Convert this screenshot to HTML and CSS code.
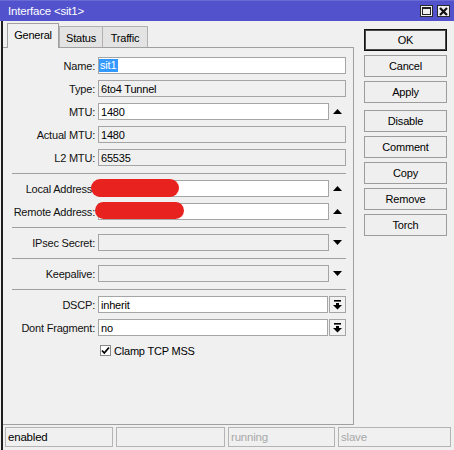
FILE: index.html
```html
<!DOCTYPE html>
<html>
<head>
<meta charset="utf-8">
<title>Interface &lt;sit1&gt;</title>
<link rel="stylesheet" href="styles.css">
</head>
<body>
<div class="window">
  <div class="titlebar">
    <span class="title">Interface &lt;sit1&gt;</span>
    <span class="tb-btns">
      <span class="tb-btn"><span class="max-ico"></span></span>
      <span class="tb-btn"><svg width="9" height="9" viewBox="0 0 9 9"><path d="M1 1 L8 8 M8 1 L1 8" stroke="#111" stroke-width="2.2"/></svg></span>
    </span>
  </div>
  <div class="body">
    <div class="main">
      <div class="left">
        <div class="tabs">
          <div class="tab active">General</div>
          <div class="tab t-status">Status</div>
          <div class="tab t-traffic">Traffic</div>
        </div>
        <div class="panel">
          <div class="group">
            <div class="row"><span class="lbl">Name:</span><div class="field"><div class="input"><span class="sel">sit1</span></div></div></div>
            <div class="row"><span class="lbl">Type:</span><div class="field"><div class="input ro">6to4 Tunnel</div></div></div>
            <div class="row"><span class="lbl">MTU:</span><div class="field"><div class="input">1480</div><span class="side"><svg width="9" height="5" viewBox="0 0 9 5"><polygon points="0,5 9,5 4.5,0" fill="#000"/></svg></span></div></div>
            <div class="row"><span class="lbl">Actual MTU:</span><div class="field"><div class="input ro">1480</div></div></div>
            <div class="row"><span class="lbl">L2 MTU:</span><div class="field"><div class="input ro">65535</div></div></div>
          </div>
          <div class="sep"></div>
          <div class="group">
            <div class="row"><span class="lbl">Local Address:</span><div class="field"><div class="input"></div><span class="side"><svg width="9" height="5" viewBox="0 0 9 5"><polygon points="0,5 9,5 4.5,0" fill="#000"/></svg></span></div><span class="redact redact-local"></span></div>
            <div class="row"><span class="lbl">Remote Address:</span><div class="field"><div class="input"></div><span class="side"><svg width="9" height="5" viewBox="0 0 9 5"><polygon points="0,5 9,5 4.5,0" fill="#000"/></svg></span></div><span class="redact redact-remote"></span></div>
          </div>
          <div class="sep"></div>
          <div class="group">
            <div class="row"><span class="lbl">IPsec Secret:</span><div class="field"><div class="input ro"></div><span class="side"><svg width="9" height="5" viewBox="0 0 9 5"><polygon points="0,0 9,0 4.5,5" fill="#000"/></svg></span></div></div>
          </div>
          <div class="sep"></div>
          <div class="group">
            <div class="row"><span class="lbl">Keepalive:</span><div class="field"><div class="input ro"></div><span class="side"><svg width="9" height="5" viewBox="0 0 9 5"><polygon points="0,0 9,0 4.5,5" fill="#000"/></svg></span></div></div>
          </div>
          <div class="sep"></div>
          <div class="group">
            <div class="row"><span class="lbl">DSCP:</span><div class="field"><div class="input">inherit</div><span class="side dd"><svg width="9" height="10" viewBox="0 0 9 10"><rect x="1" y="0" width="7" height="1.6" fill="#000"/><rect x="3" y="3" width="3" height="2" fill="#000"/><polygon points="0,5 9,5 4.5,9.5" fill="#000"/></svg></span></div></div>
            <div class="row"><span class="lbl">Dont Fragment:</span><div class="field"><div class="input">no</div><span class="side dd"><svg width="9" height="10" viewBox="0 0 9 10"><rect x="1" y="0" width="7" height="1.6" fill="#000"/><rect x="3" y="3" width="3" height="2" fill="#000"/><polygon points="0,5 9,5 4.5,9.5" fill="#000"/></svg></span></div></div>
            <div class="row"><span class="lbl"></span><div class="field"><span class="check"><svg width="9" height="9" viewBox="0 0 9 9"><polyline points="1,4.5 3.3,7 8,1.5" fill="none" stroke="#000" stroke-width="1.8"/></svg></span><span class="check-text">Clamp TCP MSS</span></div></div>
          </div>
        </div>
      </div>
      <div class="buttons">
        <div class="btn ok">OK</div>
        <div class="btn">Cancel</div>
        <div class="btn">Apply</div>
        <div class="btn gap-top">Disable</div>
        <div class="btn">Comment</div>
        <div class="btn">Copy</div>
        <div class="btn">Remove</div>
        <div class="btn">Torch</div>
      </div>
    </div>
    <div class="statusbar">
      <div class="cell c1">enabled</div>
      <div class="cell c2"></div>
      <div class="cell c3 dim">running</div>
      <div class="cell c4 dim">slave</div>
    </div>
  </div>
</div>
</body>
</html>
```
FILE: styles.css
```css
* { box-sizing: border-box; }
html, body { margin: 0; padding: 0; }
body {
  background: #f0f0f0;
  font-family: "Liberation Sans", Arial, sans-serif;
  font-size: 11px;
  letter-spacing: -0.2px;
  color: #000;
  width: 454px;
  height: 450px;
  overflow: hidden;
}
.window {
  width: 454px;
  height: 450px;
  display: flex;
  flex-direction: column;
}
.titlebar {
  height: 21px;
  flex: none;
  background: #5252cc;
  border-top: 1px solid #6a6ad6;
  display: flex;
  align-items: center;
  justify-content: space-between;
  padding: 0 4px 0 8px;
  color: #fff;
  font-size: 11.5px;
}
.tb-btns { display: flex; gap: 4px; }
.tb-btn {
  width: 13px;
  height: 12px;
  background: #f0f0f0;
  border: 1px solid #2a2a2a;
  display: flex;
  align-items: center;
  justify-content: center;
}
.max-ico {
  width: 9px;
  height: 8px;
  border: 1px solid #222;
  border-top-width: 2px;
}
.body {
  flex: 1;
  margin-left: 1px;
  border-left: 2px solid #1e1e1e;
  display: flex;
  flex-direction: column;
}
.main {
  height: 404px;
  display: flex;
  flex: none;
}
.left {
  width: 351px;
  display: flex;
  flex-direction: column;
}
.tabs {
  height: 26px;
  flex: none;
  display: flex;
  align-items: flex-end;
  padding-left: 4px;
  position: relative;
  z-index: 1;
}
.tab {
  height: 21px;
  border: 1px solid #b0b0b0;
  border-bottom: none;
  background: #e3e3e3;
  display: flex;
  align-items: center;
  justify-content: center;
  padding-top: 1px;
}
.tab.active {
  width: 52px;
  height: 25px;
  margin-bottom: -1px;
  background: #f0f0f0;
  border-color: #a0a0a0;
  padding-top: 0;
  padding-bottom: 2px;
}
.t-status { width: 44px; margin-left: 0; }
.t-traffic { width: 46px; margin-left: -1px; }
.panel {
  flex: 1;
  border: 1px solid #a0a0a0;
  border-left: none;
  padding: 9px 7px 0 0;
}
.row {
  display: grid;
  grid-template-columns: 92px 1fr;
  column-gap: 3px;
  height: 17px;
  align-items: center;
  position: relative;
}
.group .row + .row { margin-top: 6px; }
.sep {
  height: 1px;
  background: #a0a0a0;
  margin: 7px 0 6px 9px;
}
.lbl {
  text-align: right;
  white-space: nowrap;
  color: #111;
}
.field {
  display: flex;
  height: 17px;
  align-items: center;
}
.input {
  flex: 1;
  height: 17px;
  border: 1px solid #a5a5a5;
  background: #fff;
  padding-left: 2px;
  display: flex;
  align-items: center;
  white-space: nowrap;
}
.input.ro { background: #f0f0f0; }
.sel {
  background: #3399ff;
  color: #fff;
  line-height: 13px;
  padding: 0 2px 0 1px;
  margin-left: -2px;
}
.side {
  width: 17px;
  height: 17px;
  flex: none;
  display: flex;
  align-items: center;
  justify-content: center;
}
.side.dd {
  border: 1px solid #a5a5a5;
  background: #f2f2f2;
  margin-left: 1px;
  width: 17px;
}
.redact {
  position: absolute;
  background: #e8221f;
  border-radius: 9px;
}
.redact-local { left: 88px; top: -1px; width: 88px; height: 18px; }
.redact-remote { left: 92px; top: -1px; width: 89px; height: 17px; }
.check {
  width: 11px;
  height: 11px;
  border: 1px solid #8a8a8a;
  background: #fff;
  margin-left: 2px;
  display: flex;
  align-items: center;
  justify-content: center;
}
.check-text { margin-left: 3px; font-size: 11px; }
.buttons {
  flex: 1;
  padding: 8px 0 0 10px;
  display: flex;
  flex-direction: column;
}
.btn {
  width: 83px;
  height: 22px;
  border: 1px solid #9c9c9c;
  background: #efefef;
  display: flex;
  align-items: center;
  justify-content: center;
  margin-bottom: 4px;
}
.btn.ok { border: 1px solid #111; box-shadow: inset 0 0 0 1px #4a4a4a; }
.btn.gap-top { margin-top: 3px; }
.statusbar {
  height: 20px;
  flex: none;
  margin-top: 2px;
  padding-left: 2px;
  display: flex;
  gap: 3px;
}
.cell {
  height: 20px;
  border: 1px solid #b4b4b4;
  padding-left: 2px;
  display: flex;
  align-items: center;
  font-size: 11.5px;
}
.cell.dim { color: #a8a8a8; }
.c1 { width: 108px; }
.c2 { width: 109px; }
.c3 { width: 107px; }
.c4 { width: 113px; }
```
